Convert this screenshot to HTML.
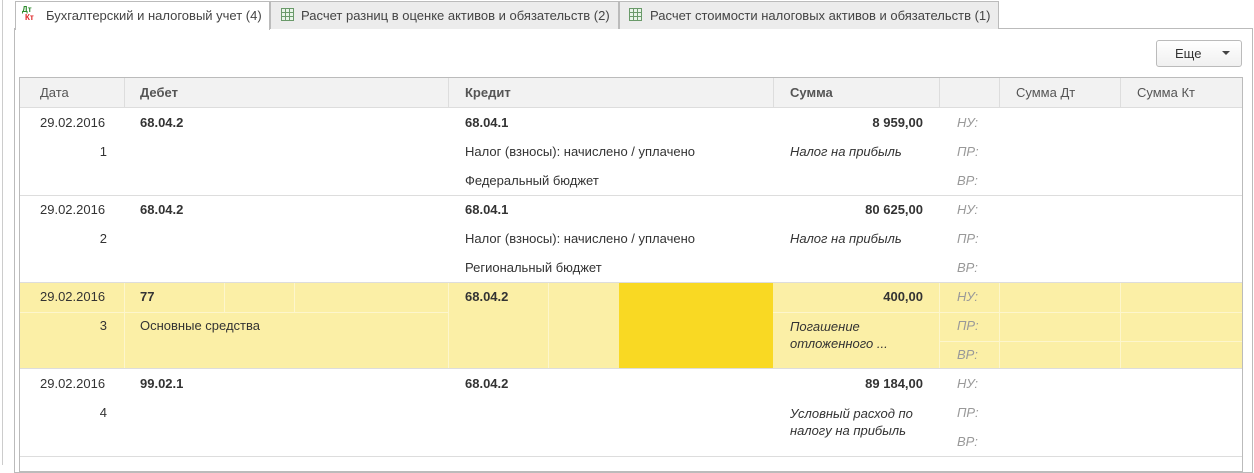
<!DOCTYPE html>
<html><head><meta charset="utf-8"><style>
*{margin:0;padding:0;box-sizing:border-box}
body{width:1254px;height:465px;background:#fff;font-family:"Liberation Sans",sans-serif;font-size:13px;color:#333;position:relative;overflow:hidden}
.a{position:absolute;white-space:nowrap}
.tab{position:absolute;top:1px;height:28px;border:1px solid #bbb;border-bottom:none;background:#ececec;padding:6px 0 0 30px;font-size:13px;color:#444}
.b{font-weight:bold}
.i{font-style:italic}
.g{color:#999;font-style:italic}
.r{text-align:right}
</style></head><body>
<div class="a" style="left:14px;top:28px;width:1239px;height:445px;border:1px solid #bbb"></div>
<div class="a" style="left:2px;top:0;width:1px;height:465px;background:#ccc"></div>
<div class="tab" style="left:15px;width:255px;background:#fff;height:29px">Бухгалтерский и налоговый учет (4)</div>
<div class="a" style="left:22px;top:6px;font-size:8px;line-height:8px;font-weight:bold"><span style="color:#2a8a2a">Дт</span><br><span style="color:#d22;margin-left:3px">Кт</span></div>
<div class="tab" style="left:270px;width:349px">Расчет разниц в оценке активов и обязательств (2)</div>
<div class="tab" style="left:619px;width:380px">Расчет стоимости налоговых активов и обязательств (1)</div>
<svg class="a" style="left:281px;top:8px" width="13" height="13"><rect x="0.5" y="0.5" width="12" height="12" fill="#e8f4e8" stroke="#6a9a6a"/><path d="M0 4.5H13M0 8.5H13M4.5 0V13M8.5 0V13" stroke="#6a9a6a"/></svg>
<svg class="a" style="left:629px;top:8px" width="13" height="13"><rect x="0.5" y="0.5" width="12" height="12" fill="#e8f4e8" stroke="#6a9a6a"/><path d="M0 4.5H13M0 8.5H13M4.5 0V13M8.5 0V13" stroke="#6a9a6a"/></svg>
<div class="a" style="left:1156px;top:40px;width:86px;height:27px;border:1px solid #bbb;border-radius:3px;background:linear-gradient(#fff,#f0f0f0);font-size:13px;padding:5px 0 0 18px">Еще</div>
<div class="a" style="left:1222px;top:51px;border-left:4px solid transparent;border-right:4px solid transparent;border-top:4px solid #444"></div>

<div class="a" style="left:19px;top:77px;width:1224px;height:395px;border:1px solid #bbb"></div>
<div class="a" style="left:20px;top:78px;width:1222px;height:30px;background:#f2f2f2;border-bottom:1px solid #ddd"></div>
<div class="a" style="left:124px;top:78px;width:1px;height:30px;background:#ddd"></div>
<div class="a" style="left:448px;top:78px;width:1px;height:30px;background:#ddd"></div>
<div class="a" style="left:773px;top:78px;width:1px;height:30px;background:#ddd"></div>
<div class="a" style="left:939px;top:78px;width:1px;height:30px;background:#ddd"></div>
<div class="a" style="left:999px;top:78px;width:1px;height:30px;background:#ddd"></div>
<div class="a" style="left:1120px;top:78px;width:1px;height:30px;background:#ddd"></div>
<div class="a" style="left:40px;top:85px;color:#555">Дата</div>
<div class="a b" style="left:140px;top:85px;color:#555">Дебет</div>
<div class="a b" style="left:465px;top:85px;color:#555">Кредит</div>
<div class="a b" style="left:790px;top:85px;color:#555">Сумма</div>
<div class="a" style="left:1016px;top:85px;color:#555">Сумма Дт</div>
<div class="a" style="left:1137px;top:85px;color:#555">Сумма Кт</div>

<div class="a" style="left:20px;top:283px;width:1222px;height:85px;background:#fbefa6"></div>
<div class="a" style="left:619px;top:283px;width:154px;height:85px;background:#f9d923"></div>
<div class="a" style="left:124px;top:283px;width:1px;height:85px;background:#fdf6cc"></div>
<div class="a" style="left:448px;top:283px;width:1px;height:85px;background:#fdf6cc"></div>
<div class="a" style="left:224px;top:283px;width:1px;height:29px;background:#fdf6cc"></div>
<div class="a" style="left:294px;top:283px;width:1px;height:29px;background:#fdf6cc"></div>
<div class="a" style="left:548px;top:283px;width:1px;height:85px;background:#fdf6cc"></div>
<div class="a" style="left:939px;top:283px;width:1px;height:85px;background:#fdf6cc"></div>
<div class="a" style="left:999px;top:283px;width:1px;height:85px;background:#fdf6cc"></div>
<div class="a" style="left:1120px;top:283px;width:1px;height:85px;background:#fdf6cc"></div>
<div class="a" style="left:20px;top:312px;width:428px;height:1px;background:#fdf6cc"></div>
<div class="a" style="left:773px;top:312px;width:469px;height:1px;background:#fdf6cc"></div>
<div class="a" style="left:939px;top:341px;width:303px;height:1px;background:#fdf6cc"></div>

<div class="a" style="left:20px;top:195px;width:1222px;height:1px;background:#ddd"></div>
<div class="a" style="left:20px;top:282px;width:1222px;height:1px;background:#ddd"></div>
<div class="a" style="left:20px;top:368px;width:1222px;height:1px;background:#ddd"></div>
<div class="a" style="left:20px;top:456px;width:1222px;height:1px;background:#ddd"></div>

<div class="a" style="left:40px;top:115px">29.02.2016</div>
<div class="a r" style="left:60px;top:144px;width:47px">1</div>
<div class="a b" style="left:140px;top:115px">68.04.2</div>
<div class="a b" style="left:465px;top:115px">68.04.1</div>
<div class="a" style="left:465px;top:144px">Налог (взносы): начислено / уплачено</div>
<div class="a" style="left:465px;top:173px">Федеральный бюджет</div>
<div class="a b r" style="left:780px;top:115px;width:143px">8 959,00</div>
<div class="a i" style="left:790px;top:144px">Налог на прибыль</div>
<div class="a g" style="left:957px;top:115px">НУ:</div>
<div class="a g" style="left:957px;top:144px">ПР:</div>
<div class="a g" style="left:957px;top:173px">ВР:</div>

<div class="a" style="left:40px;top:202px">29.02.2016</div>
<div class="a r" style="left:60px;top:231px;width:47px">2</div>
<div class="a b" style="left:140px;top:202px">68.04.2</div>
<div class="a b" style="left:465px;top:202px">68.04.1</div>
<div class="a" style="left:465px;top:231px">Налог (взносы): начислено / уплачено</div>
<div class="a" style="left:465px;top:260px">Региональный бюджет</div>
<div class="a b r" style="left:780px;top:202px;width:143px">80 625,00</div>
<div class="a i" style="left:790px;top:231px">Налог на прибыль</div>
<div class="a g" style="left:957px;top:202px">НУ:</div>
<div class="a g" style="left:957px;top:231px">ПР:</div>
<div class="a g" style="left:957px;top:260px">ВР:</div>

<div class="a" style="left:40px;top:289px">29.02.2016</div>
<div class="a r" style="left:60px;top:318px;width:47px">3</div>
<div class="a b" style="left:140px;top:289px">77</div>
<div class="a" style="left:140px;top:318px">Основные средства</div>
<div class="a b" style="left:465px;top:289px">68.04.2</div>
<div class="a b r" style="left:780px;top:289px;width:143px">400,00</div>
<div class="a i" style="left:790px;top:318px;line-height:17px">Погашение<br>отложенного ...</div>
<div class="a g" style="left:957px;top:289px">НУ:</div>
<div class="a g" style="left:957px;top:318px">ПР:</div>
<div class="a g" style="left:957px;top:347px">ВР:</div>

<div class="a" style="left:40px;top:376px">29.02.2016</div>
<div class="a r" style="left:60px;top:405px;width:47px">4</div>
<div class="a b" style="left:140px;top:376px">99.02.1</div>
<div class="a b" style="left:465px;top:376px">68.04.2</div>
<div class="a b r" style="left:780px;top:376px;width:143px">89 184,00</div>
<div class="a i" style="left:790px;top:405px;line-height:17px">Условный расход по<br>налогу на прибыль</div>
<div class="a g" style="left:957px;top:376px">НУ:</div>
<div class="a g" style="left:957px;top:405px">ПР:</div>
<div class="a g" style="left:957px;top:434px">ВР:</div>
</body></html>
